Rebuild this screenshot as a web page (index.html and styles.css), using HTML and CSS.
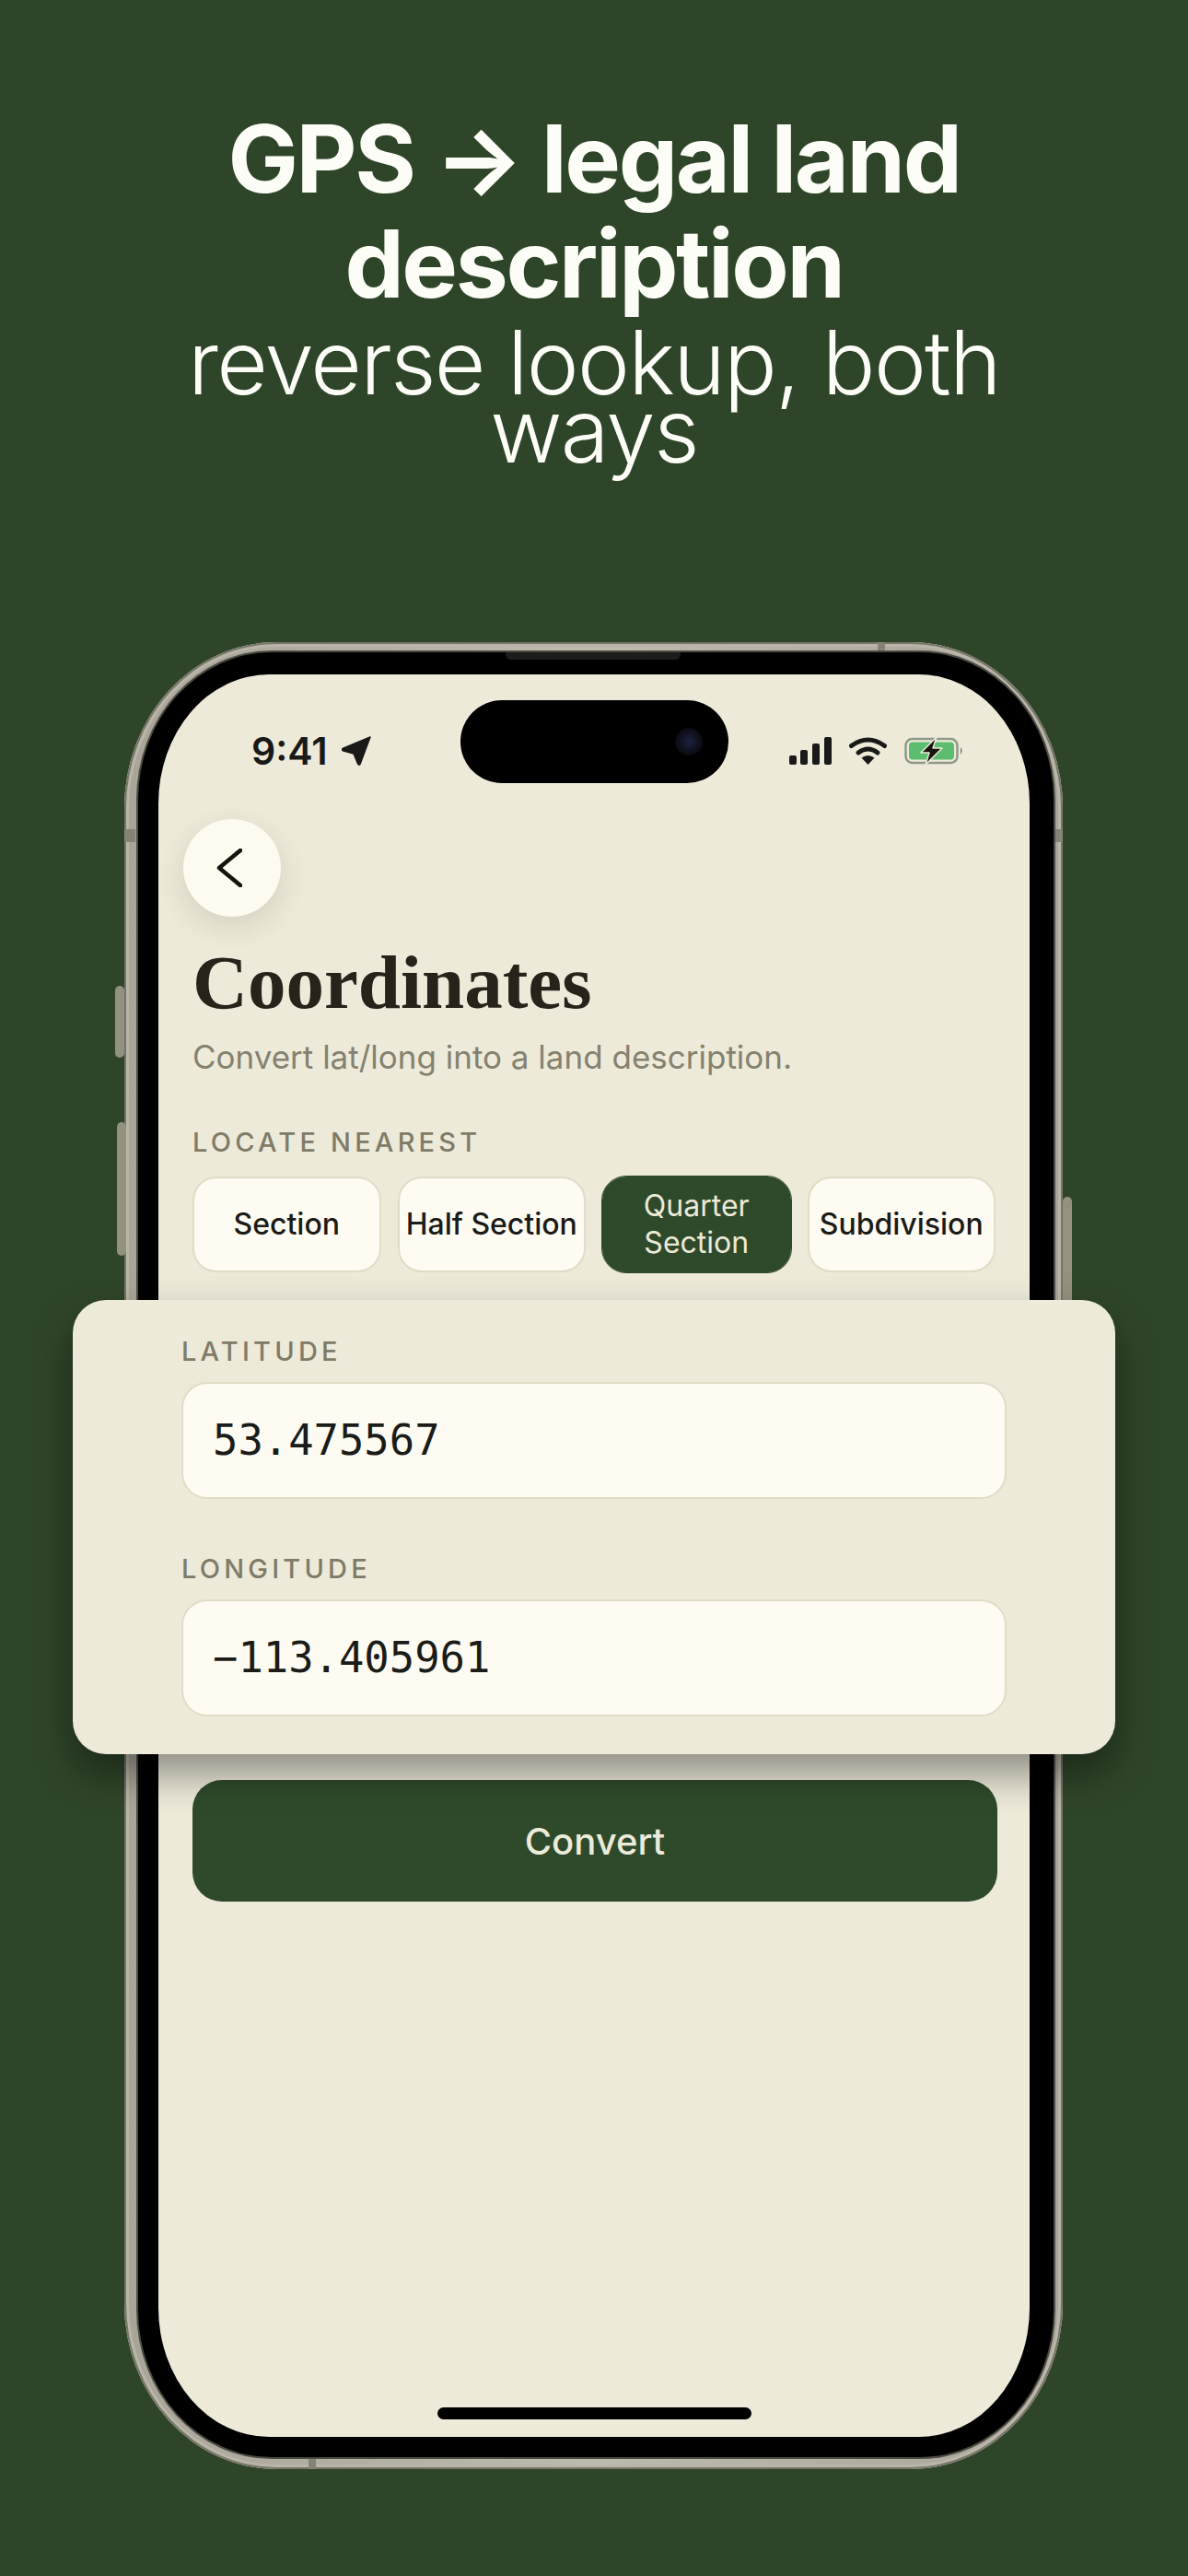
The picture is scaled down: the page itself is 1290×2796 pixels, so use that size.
FILE: index.html
```html
<!DOCTYPE html>
<html lang="en">
<head>
    <meta charset="UTF-8">
    <meta name="viewport" content="width=device-width, initial-scale=1.0">
    <title>Coordinates</title>
    <link rel="stylesheet" href="styles.css">
</head>
<body>
    <header class="hero">
        <h1>GPS → legal land<br>description</h1>
        <p>reverse lookup, both<br>ways</p>
    </header>

    <div class="device">
        <span class="side-btn mute"></span>
        <span class="side-btn volume"></span>
        <span class="side-btn power"></span>
        <span class="band band-top"></span>
        <span class="band band-bottom"></span>
        <span class="band band-left"></span>
        <span class="band band-right"></span>
        <div class="bezel">
            <span class="speaker"></span>
            <div class="screen">
                <div class="status">
                    <div class="status-left">
                        <span class="time">9:41</span>
                        <svg width="32" height="32" viewBox="0 0 32 32">
                            <path d="M31 1 L1 13.5 Q0 15.5 2 16 L13 19 L17.5 30 Q18.5 32 20 30.5 Z" fill="#191917" stroke="#191917" stroke-width="1.5" stroke-linejoin="round"/>
                        </svg>
                    </div>
                    <div class="island"><span class="lens"></span></div>
                    <div class="status-right">
                        <svg width="46" height="30" viewBox="0 0 46 30">
                            <rect x="0" y="20" width="8" height="10" rx="2" fill="#191917"/>
                            <rect x="12" y="14" width="8" height="16" rx="2" fill="#191917"/>
                            <rect x="25" y="7" width="8" height="23" rx="2" fill="#191917"/>
                            <rect x="38" y="0" width="8" height="30" rx="2" fill="#191917"/>
                        </svg>
                        <svg width="41" height="30" viewBox="0 0 41 30">
                            <path d="M2.5 9.5 Q20.5 -3.5 38.5 9.5" fill="none" stroke="#191917" stroke-width="5" stroke-linecap="round"/>
                            <path d="M10 17 Q20.5 9 31 17" fill="none" stroke="#191917" stroke-width="5" stroke-linecap="round"/>
                            <path d="M13.5 22.5 Q20.5 17.5 27.5 22.5 L20.5 30 Z" fill="#191917"/>
                        </svg>
                        <svg width="65" height="30" viewBox="0 0 65 30">
                            <rect x="1.5" y="2" width="56" height="26" rx="7" fill="none" stroke="#8f9a86" stroke-width="2.5"/>
                            <rect x="5" y="5.5" width="49" height="19" rx="4" fill="#5cbc70"/>
                            <path d="M61 11 Q64 15 61 19 Z" fill="#6e6e62"/>
                            <path d="M35 0 L18 17 H27 L23 30 L41 12 H31 Z" fill="#15150f" stroke="#ecead9" stroke-width="1.5" stroke-linejoin="round"/>
                        </svg>
                    </div>
                </div>

                <button class="back">
                    <svg width="28" height="42" viewBox="0 0 28 42">
                        <path d="M26 2 L3 21 L26 40" fill="none" stroke="#14130e" stroke-width="4.5" stroke-linecap="round" stroke-linejoin="round"/>
                    </svg>
                </button>

                <h2 class="page-title">Coordinates</h2>
                <p class="page-sub">Convert lat/long into a land description.</p>

                <div class="caps">LOCATE NEAREST</div>
                <div class="chips">
                    <div class="chip">Section</div>
                    <div class="chip">Half Section</div>
                    <div class="chip active">Quarter Section</div>
                    <div class="chip">Subdivision</div>
                </div>

                <div class="coord-card">
                    <div class="caps">LATITUDE</div>
                    <div class="field">53.475567</div>
                    <div class="caps second">LONGITUDE</div>
                    <div class="field">−113.405961</div>
                </div>

                <button class="convert">Convert</button>

                <span class="home-bar"></span>
            </div>
        </div>
    </div>
</body>
</html>
```

FILE: styles.css
```css
body {
    margin: 0;
    height: 2796px;
    overflow: hidden;
    background: #2f4529;
    font-family: 'Inter', sans-serif;
}
.hero {
    padding-top: 115px;
    text-align: center;
    color: #fdfdf8;
}
.hero h1 {
    margin: 0;
    font-size: 102px;
    line-height: 114px;
    font-weight: 700;
    letter-spacing: -2.4px;
}
.hero p {
    margin: 13px 0 0;
    font-size: 96px;
    line-height: 74px;
    font-weight: 300;
    letter-spacing: -1.7px;
}
.device {
    position: relative;
    box-sizing: border-box;
    width: 1019px;
    height: 1983px;
    margin: 193px 0 0 135px;
    padding: 11px 10px 13px 15px;
    border-radius: 165px / 180px;
    background: linear-gradient(90deg, #a8a598, #bdbaae 50%, #a8a598);
    box-shadow: inset 0 0 0 2px #77756a, inset 0 0 0 5px #b9b6a9;
}
.side-btn {
    position: absolute;
    width: 10px;
    border-radius: 5px;
    background: #93917f;
}
.mute { left: -10px; top: 373px; height: 78px; }
.volume { left: -8px; top: 521px; height: 145px; }
.power { right: -10px; top: 602px; height: 130px; }
.band {
    position: absolute;
    background: #858375;
}
.band-top { left: 818px; top: 0; width: 8px; height: 11px; }
.band-bottom { left: 200px; bottom: 0; width: 8px; height: 13px; }
.band-left { left: 0; top: 203px; width: 12px; height: 14px; }
.band-right { right: 0; top: 203px; width: 10px; height: 14px; }
.bezel {
    position: relative;
    box-sizing: border-box;
    height: 100%;
    padding: 24px 26px 22px 22px;
    border-radius: 145px / 160px;
    background: #000;
    box-shadow: 0 0 0 2px #4c4b43;
}
.speaker {
    position: absolute;
    left: 399px;
    top: 0;
    width: 190px;
    height: 8px;
    border-radius: 0 0 6px 6px;
    background: #1c1c1a;
}
.screen {
    position: relative;
    box-sizing: border-box;
    height: 100%;
    padding: 0 37px;
    border-radius: 120px / 140px;
    background: #edeada;
}
.status {
    display: grid;
    grid-template-columns: 291px 291px 1fr;
    margin: 0 -37px;
    padding: 28px 71px 0 37px;
    align-items: center;
}
.status-left {
    display: flex;
    align-items: center;
    gap: 15px;
    margin: 20px 0 0 64px;
}
.time {
    font-size: 41px;
    font-weight: 600;
    color: #191917;
    line-height: 32px;
}
.island {
    position: relative;
    height: 90px;
    border-radius: 45px;
    background: #000;
}
.lens {
    position: absolute;
    right: 28px;
    top: 30px;
    width: 30px;
    height: 30px;
    border-radius: 50%;
    background: radial-gradient(circle, #1d2140, #0a0a10 70%);
}
.status-right {
    display: flex;
    justify-content: flex-end;
    align-items: center;
    gap: 19px;
    margin-top: 20px;
}
.back {
    display: flex;
    align-items: center;
    justify-content: center;
    width: 106px;
    height: 106px;
    margin: 39px 0 0 -10px;
    padding: 0 7px 0 0;
    border: none;
    border-radius: 50%;
    background: #fdfbef;
    box-shadow: 0 10px 30px rgba(60, 55, 30, 0.14);
}
.page-title {
    margin: 26px 0 0;
    font-family: 'Liberation Serif', serif;
    font-size: 83px;
    line-height: 90px;
    font-weight: 700;
    color: #26241a;
}
.page-sub {
    margin: 14px 0 0;
    font-size: 35px;
    line-height: 44px;
    color: #85816f;
}
.caps {
    font-size: 29px;
    line-height: 34px;
    font-weight: 500;
    letter-spacing: 4.2px;
    color: #7f7b67;
}
.page-sub + .caps {
    margin-top: 54px;
}
.chips {
    display: grid;
    grid-template-columns: repeat(4, 1fr);
    gap: 18px;
    margin-top: 20px;
}
.chip {
    display: flex;
    align-items: center;
    justify-content: center;
    height: 104px;
    box-sizing: border-box;
    padding: 0 6px;
    border: 2px solid #e0dcc5;
    border-radius: 26px;
    background: #fdfbf2;
    font-size: 32px;
    line-height: 40px;
    font-weight: 500;
    text-align: center;
    color: #1b1b18;
}
.chip.active {
    border-color: #2f4a2b;
    background: #2f4a2b;
    color: #ecead9;
    font-weight: 400;
    outline: 1px solid #2f4a2b;
}
.coord-card {
    position: relative;
    box-sizing: border-box;
    height: 493px;
    margin: 30px -130px 0;
    padding: 39px 118px 0;
    border-radius: 36px;
    background: #edeada;
    box-shadow: 0 22px 44px rgba(0, 0, 0, 0.4);
}
.field {
    box-sizing: border-box;
    height: 127px;
    margin-top: 16px;
    padding-left: 32px;
    border: 2px solid #e0dcc5;
    border-radius: 28px;
    background: #fdfbf2;
    font-family: 'DejaVu Sans Mono', monospace;
    font-size: 45.5px;
    line-height: 123px;
    color: #1b1b18;
}
.caps.second {
    margin-top: 59px;
}
.convert {
    display: block;
    width: 874px;
    height: 132px;
    margin-top: 28px;
    padding: 0;
    border: none;
    border-radius: 32px;
    background: #2f4a2b;
    font-family: 'Inter', sans-serif;
    font-size: 40px;
    font-weight: 500;
    color: #ecead9;
}
.home-bar {
    position: absolute;
    left: 303px;
    bottom: 19px;
    width: 341px;
    height: 13px;
    border-radius: 7px;
    background: #000;
}
```
